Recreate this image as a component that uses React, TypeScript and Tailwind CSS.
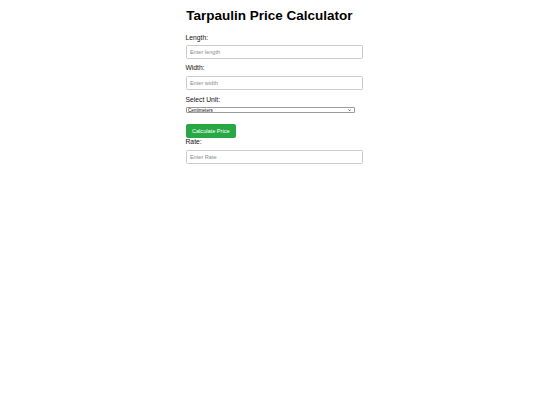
import React from "react";

export default function App() {
  return (
    <div className="min-h-[405px] w-full bg-white font-['Liberation_Sans',Arial,sans-serif] text-black">
      <div className="mx-auto flex w-[169px] flex-col pt-[8.3px]">
        <h1 className="m-0 ml-[0.8px] whitespace-nowrap text-[13.5px] font-bold leading-[15.5px]">
          Tarpaulin Price Calculator
        </h1>

        <label className="mt-[10.2px] block text-[6.75px] leading-[7.8px] text-[#111]">Length:</label>
        <input
          type="number"
          placeholder="Enter length"
          className="mt-[3.5px] box-border block h-[14px] w-[177px] rounded-[1.5px] border border-[#cccccc] px-[3.4px] text-[5.6px] leading-[6px] outline-none placeholder:text-[#8a8a8a]"
        />

        <label className="mt-[5px] block text-[6.75px] leading-[7.8px] text-[#111]">Width:</label>
        <input
          type="number"
          placeholder="Enter width"
          className="mt-[3.6px] box-border block h-[14px] w-[177px] rounded-[1.5px] border border-[#cccccc] px-[3.4px] text-[5.6px] leading-[6px] outline-none placeholder:text-[#8a8a8a]"
        />

        <label className="mt-[6px] block text-[6.75px] leading-[7.8px] text-[#111]">Select Unit:</label>
        <div
          role="combobox"
          aria-expanded="false"
          className="mt-[4px] box-border flex h-[6px] w-[169px] items-center justify-between rounded-[1px] border-[0.6px] border-[#9a9a9a] bg-white pl-[1.5px] pr-[2.5px]"
        >
          <span className="text-[4.6px] leading-[5px] text-[#111]">Centimeters</span>
          <svg viewBox="0 0 10 6" className="h-[2.2px] w-[3.4px]">
            <path d="M1 1 L5 5 L9 1" fill="none" stroke="#222" strokeWidth="2" />
          </svg>
        </div>

        <button
          type="button"
          className="mt-[10.3px] box-border block h-[14.5px] w-[50.5px] rounded-[2px] bg-[#28a745] text-[5.6px] leading-[6px] text-white"
        >
          Calculate Price
        </button>

        <label className="-mt-[0.3px] block text-[6.75px] leading-[7.8px] text-[#111]">Rate:</label>
        <input
          type="number"
          placeholder="Enter Rate"
          className="mt-[4.5px] box-border block h-[14px] w-[177px] rounded-[1.5px] border border-[#cccccc] px-[3.4px] text-[5.6px] leading-[6px] outline-none placeholder:text-[#8a8a8a]"
        />
      </div>
    </div>
  );
}
